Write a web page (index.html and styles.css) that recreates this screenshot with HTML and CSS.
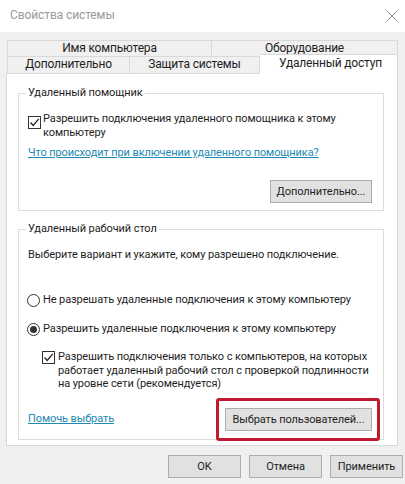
FILE: index.html
```html
<!DOCTYPE html>
<html lang="ru">
<head>
<meta charset="utf-8">
<title>Свойства системы</title>
<link rel="stylesheet" href="styles.css">
</head>
<body>
<div class="window">
  <div class="titlebar">
    <span class="title">Свойства системы</span>
    <svg class="close" width="12" height="12" viewBox="0 0 12 12"><path d="M0.5 0.5L11.5 11.5M11.5 0.5L0.5 11.5" stroke="#8a8a8a" stroke-width="1" fill="none"/></svg>
  </div>
  <div class="content">
    <div class="tabs">
      <div class="tabrow row1">
        <div class="tab t-name">Имя компьютера</div>
        <div class="tab t-hw">Оборудование</div>
      </div>
      <div class="tabrow row2">
        <div class="tab t-adv">Дополнительно</div>
        <div class="tab t-prot">Защита системы</div>
        <div class="tab active">Удаленный доступ</div>
      </div>
    </div>
    <div class="panel">
      <fieldset class="group g1">
        <legend>Удаленный помощник</legend>
        <div class="check">
          <span class="box"><svg width="11" height="11" viewBox="0 0 11 11"><path d="M1.5 5.5L4.2 8.5L9.8 1.8" stroke="#222" stroke-width="1.3" fill="none"/></svg></span>
          <span class="label">Разрешить подключения удаленного помощника к этому<br>компьютеру</span>
        </div>
        <a class="link link1">Что происходит при включении удаленного помощника?</a>
        <div class="btnrow"><button class="btn btn-more">Дополнительно...</button></div>
      </fieldset>
      <fieldset class="group g2">
        <legend>Удаленный рабочий стол</legend>
        <div class="desc">Выберите вариант и укажите, кому разрешено подключение.</div>
        <div class="radio r1"><span class="circle"></span><span>Не разрешать удаленные подключения к этому компьютеру</span></div>
        <div class="radio r2"><span class="circle on"></span><span>Разрешить удаленные подключения к этому компьютеру</span></div>
        <div class="check nla">
          <span class="box"><svg width="11" height="11" viewBox="0 0 11 11"><path d="M1.5 5.5L4.2 8.5L9.8 1.8" stroke="#222" stroke-width="1.3" fill="none"/></svg></span>
          <span class="label">Разрешить подключения только с компьютеров, на которых<br>работает удаленный рабочий стол с проверкой подлинности<br>на уровне сети (рекомендуется)</span>
        </div>
        <div class="bottomrow">
          <a class="link">Помочь выбрать</a>
          <span class="highlight"><button class="btn btn-users">Выбрать пользователей...</button></span>
        </div>
      </fieldset>
    </div>
    <div class="actions">
      <button class="btn dlg">OK</button>
      <button class="btn dlg">Отмена</button>
      <button class="btn dlg">Применить</button>
    </div>
  </div>
</div>
</body>
</html>
```
FILE: styles.css
```css
* { box-sizing: border-box; }
html, body { margin: 0; padding: 0; }
body {
  width: 405px;
  height: 484px;
  overflow: hidden;
  font-family: Roboto, "Noto Sans", "DejaVu Sans", sans-serif;
  font-size: 11px;
  letter-spacing: -0.1px;
  color: #1e1e1e;
  background: #f0f0f0;
}
.window { width: 405px; height: 484px; display: flex; flex-direction: column; }
.titlebar {
  height: 32px;
  background: #fff;
  display: flex;
  align-items: center;
  justify-content: space-between;
  padding: 0 7px 0 10px;
  flex: none;
}
.title { color: #9a9a9a; font-size: 12px; margin-top: -2px; }
.content { flex: 1; padding: 8px 7px 0 6px; }
.tabs { display: flex; flex-direction: column; }
.tabrow { display: flex; }
.tab {
  height: 17px;
  line-height: 15px;
  font-size: 12px;
  letter-spacing: -0.2px;
  text-align: center;
  background: #f0f0f0;
  border: 1px solid #d9d9d9;
  white-space: nowrap;
}
.row1 .tab + .tab { border-left: none; }
.row1 { padding-left: 1px; }
.t-name { width: 205px; }
.t-hw { flex: 1; }
.row2 { padding-left: 1px; margin-top: -1px; align-items: flex-end; }
.row2 .tab { border-bottom: none; }
.t-adv { width: 123px; }
.t-prot { width: 130px; border-left: none !important; }
.tab.active {
  flex: 1;
  height: 20px;
  margin-top: -3px;
  margin-bottom: -1px;
  background: #fff;
  border-left: none;
  line-height: 17px;
  position: relative;
  z-index: 1;
  padding-left: 4px;
}
.panel {
  background: #fff;
  border: 1px solid #d9d9d9;
  height: 373px;
  padding: 11px 13px 0 11px;
}
.group {
  border: 1px solid #dcdcdc;
  margin: 0;
  padding: 0 11px 7px 9px;
  min-width: 0;
}
.group legend {
  padding: 0 2px;
  margin-left: -2px;
  line-height: 16px;
}
.label, .desc, .radio span, .link { white-space: nowrap; }
.check { display: flex; align-items: flex-start; line-height: 13.5px; }
.box {
  width: 13px;
  height: 13px;
  border: 1px solid #333;
  flex: none;
  margin-right: 2px;
  display: flex;
  align-items: center;
  justify-content: center;
  background: #fff;
}
.g1 .check { margin-top: 11px; }
.g1 .box { margin-top: 4px; }
.link {
  display: block;
  color: #2289b3;
  text-decoration: underline;
  text-decoration-color: #2289b3;
  line-height: 16px;
  cursor: pointer;
}
.link1 { margin-top: 6px; }
.btnrow { display: flex; justify-content: flex-end; margin-top: 19px; }
.btn {
  font-family: inherit;
  font-size: 11px;
  letter-spacing: -0.1px;
  color: #1e1e1e;
  background: #e1e1e1;
  border: 1px solid #adadad;
  height: 23px;
  padding: 0;
  margin: 0;
}
.btn-more { width: 102px; }
.g2 { margin-top: 10px; padding-bottom: 8px; }
.desc { line-height: 16px; margin-top: 10px; }
.radio { display: flex; align-items: center; line-height: 16px; }
.r1 { margin-top: 29px; margin-left: -1px; }
.r2 { margin-top: 13px; margin-left: -1px; }
.circle {
  width: 13px;
  height: 13px;
  border: 1px solid #333;
  border-radius: 50%;
  margin-right: 3px;
  flex: none;
  display: flex;
  align-items: center;
  justify-content: center;
  background: #fff;
}
.circle.on::after {
  content: "";
  width: 7px;
  height: 7px;
  border-radius: 50%;
  background: #333;
}
.nla { margin-top: 13px; margin-left: 14px; }
.nla .box { margin-top: 1px; margin-right: 3px; }
.bottomrow {
  display: flex;
  justify-content: space-between;
  align-items: center;
  margin-top: 17px;
}
.highlight { position: relative; display: block; }
.highlight::after {
  content: "";
  position: absolute;
  top: -10px;
  bottom: -10px;
  left: -9px;
  right: -8px;
  border: 3px solid #bf1a2f;
  border-radius: 3px;
  pointer-events: none;
}
.btn-users { width: 147px; display: block; }
.actions {
  display: flex;
  justify-content: flex-end;
  gap: 8px;
  margin-top: 9px;
  margin-right: -5px;
}
.btn.dlg { width: 73px; height: 23px; }
```
